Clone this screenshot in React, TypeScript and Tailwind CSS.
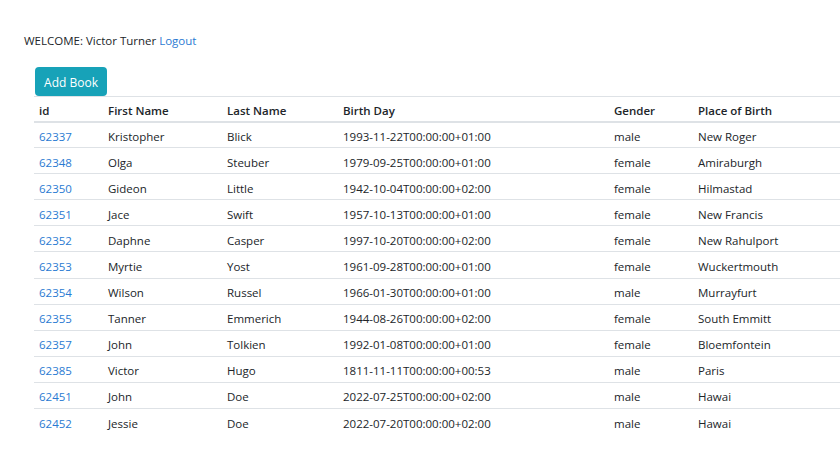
import React from "react";

const rows = [
  ["62337", "Kristopher", "Blick", "1993-11-22T00:00:00+01:00", "male", "New Roger"],
  ["62348", "Olga", "Steuber", "1979-09-25T00:00:00+01:00", "female", "Amiraburgh"],
  ["62350", "Gideon", "Little", "1942-10-04T00:00:00+02:00", "female", "Hilmastad"],
  ["62351", "Jace", "Swift", "1957-10-13T00:00:00+01:00", "female", "New Francis"],
  ["62352", "Daphne", "Casper", "1997-10-20T00:00:00+02:00", "female", "New Rahulport"],
  ["62353", "Myrtie", "Yost", "1961-09-28T00:00:00+01:00", "female", "Wuckertmouth"],
  ["62354", "Wilson", "Russel", "1966-01-30T00:00:00+01:00", "male", "Murrayfurt"],
  ["62355", "Tanner", "Emmerich", "1944-08-26T00:00:00+02:00", "female", "South Emmitt"],
  ["62357", "John", "Tolkien", "1992-01-08T00:00:00+01:00", "female", "Bloemfontein"],
  ["62385", "Victor", "Hugo", "1811-11-11T00:00:00+00:53", "male", "Paris"],
  ["62451", "John", "Doe", "2022-07-25T00:00:00+02:00", "male", "Hawai"],
  ["62452", "Jessie", "Doe", "2022-07-20T00:00:00+02:00", "male", "Hawai"],
];

export default function App() {
  return (
    <div
      className="w-[840px] h-[450px] overflow-hidden bg-white text-[#212529] text-[11.5px]"
      style={{ fontFamily: '"Segoe UI", "Open Sans", "Noto Sans", sans-serif' }}
    >
      <div className="pl-[24px] pt-[32px] leading-[18px]">
        WELCOME: Victor Turner <span className="text-[#2a7ad2]">Logout</span>
      </div>
      <div className="pl-[34px] pt-[17px]">
        <button className="ml-[1px] h-[29px] w-[72px] rounded-[4px] bg-[#17a2b8] text-white text-[12px] leading-[18px] pt-[2px]">
          Add Book
        </button>
        <table className="w-[900px] border-collapse table-fixed">
          <colgroup>
            <col className="w-[69px]" />
            <col className="w-[119px]" />
            <col className="w-[116px]" />
            <col className="w-[271px]" />
            <col className="w-[84px]" />
            <col />
          </colgroup>
          <thead>
            <tr className="border-t border-[#dee2e6]">
              {["id", "First Name", "Last Name", "Birth Day", "Gender", "Place of Birth"].map((h) => (
                <th
                  key={h}
                  className="text-left font-semibold px-[5px] pt-[4px] pb-0 h-[25px] border-b-2 border-[#dee2e6] leading-[18px]"
                >
                  {h}
                </th>
              ))}
            </tr>
          </thead>
          <tbody>
            {rows.map((r) => (
              <tr key={r[0]} className="border-t border-[#dee2e6]">
                {r.map((c, i) => (
                  <td
                    key={i}
                    className={
                      "px-[5px] pt-[4px] pb-0 h-[26.1px] leading-[18px] " + (i === 0 ? "text-[#2a7ad2]" : "")
                    }
                  >
                    {c}
                  </td>
                ))}
              </tr>
            ))}
          </tbody>
        </table>
      </div>
    </div>
  );
}
